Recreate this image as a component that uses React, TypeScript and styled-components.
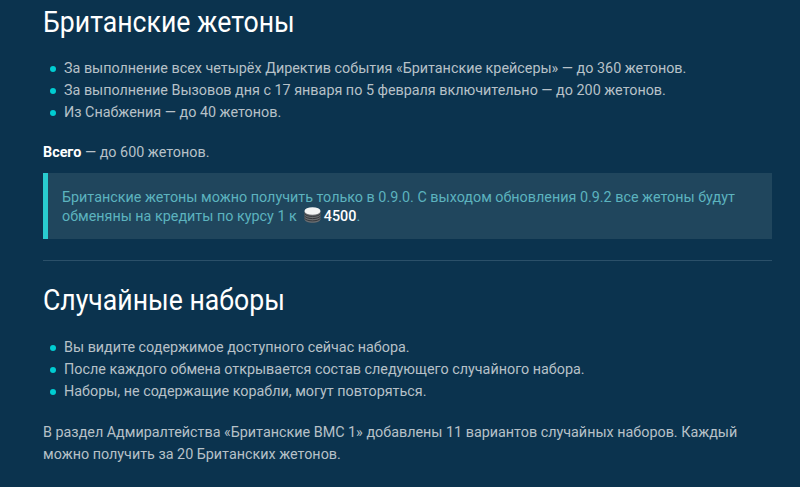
import React from "react";
import styled, { createGlobalStyle } from "styled-components";

const Global = createGlobalStyle`
  html, body { margin: 0; padding: 0; background: #0b334e; }
  body { font-family: Roboto, "Liberation Sans", sans-serif; }
`;

const Page = styled.main`
  width: 800px;
  height: 487px;
  box-sizing: border-box;
  padding: 0 28px 0 43px;
  overflow: hidden;
  color: #b7c1c8;
  font-size: 14.35px;
  line-height: 22px;
`;

const Heading = styled.h2`
  margin: 0;
  font-size: 30px;
  line-height: 34px;
  font-weight: 400;
  color: #fff;
  transform: scaleX(0.888);
  transform-origin: left center;
  white-space: nowrap;
`;

const FirstHeading = styled(Heading)`
  margin-top: 5px;
`;

const List = styled.ul`
  list-style: none;
  margin: 19px 0 0;
  padding: 0 0 0 21px;
`;

const Item = styled.li`
  position: relative;
  &::before {
    content: "";
    position: absolute;
    left: -14px;
    top: 8px;
    width: 6px;
    height: 6px;
    border-radius: 50%;
    background: #00cdd2;
  }
`;

const Paragraph = styled.p`
  margin: 18px 0 0;
`;

const ClosingParagraph = styled(Paragraph)`
  margin-top: 19px;
`;

const Strong = styled.strong`
  color: #fff;
  font-weight: 700;
`;

const Notice = styled.div`
  margin-top: 9px;
  padding: 15px 14px 13px 14px;
  background: #20465d;
  border-left: 5px solid #29ccd0;
  color: #5cb3bf;
  line-height: 19px;
`;

const Value = styled.span`
  color: #fff;
  font-weight: 500;
`;

const Coin = styled.svg`
  width: 17px;
  height: 16px;
  vertical-align: -2px;
  margin: 0 3px 0 7px;
`;

const Divider = styled.hr`
  margin: 21px 0 0;
  border: 0;
  height: 1px;
  background: #2b5069;
`;

const SecondHeading = styled(Heading)`
  margin-top: 22px;
  margin-bottom: 20px;
`;

const SecondList = styled(List)`
  margin-top: 0;
`;

export default function App() {
  return (
    <>
      <Global />
      <Page>
        <FirstHeading>Британские жетоны</FirstHeading>
        <List>
          <Item>За выполнение всех четырёх Директив события «Британские крейсеры» — до 360 жетонов.</Item>
          <Item>За выполнение Вызовов дня с 17 января по 5 февраля включительно — до 200 жетонов.</Item>
          <Item>Из Снабжения — до 40 жетонов.</Item>
        </List>
        <Paragraph>
          <Strong>Всего</Strong> — до 600 жетонов.
        </Paragraph>
        <Notice>
          Британские жетоны можно получить только в 0.9.0. С выходом обновления 0.9.2 все жетоны будут обменяны на кредиты по курсу 1 к
          <Coin viewBox="0 0 17 16" aria-hidden="true">
            <path d="M.5 4v8c0 2.200 3.600 3.800 8 3.800s8-1.600 8-3.800V4z" fill="#6a6d70" />
            <path d="M.5 6.800c1.500 1.700 4.500 2.600 8 2.600s6.500-.9 8-2.600M.5 9c1.500 1.700 4.500 2.600 8 2.600s6.500-.9 8-2.600M.5 11.300c1.500 1.700 4.500 2.600 8 2.600s6.500-.9 8-2.600" fill="none" stroke="#33363a" strokeWidth="1" />
            <ellipse cx="8.500" cy="4" rx="8" ry="3.800" fill="#f3f4f4" />
          </Coin>
          <Value>4500</Value>.
        </Notice>
        <Divider />
        <SecondHeading>Случайные наборы</SecondHeading>
        <SecondList>
          <Item>Вы видите содержимое доступного сейчас набора.</Item>
          <Item>После каждого обмена открывается состав следующего случайного набора.</Item>
          <Item>Наборы, не содержащие корабли, могут повторяться.</Item>
        </SecondList>
        <ClosingParagraph>
          В раздел Адмиралтейства «Британские ВМС 1» добавлены 11 вариантов случайных наборов. Каждый можно получить за 20 Британских жетонов.
        </ClosingParagraph>
      </Page>
    </>
  );
}
